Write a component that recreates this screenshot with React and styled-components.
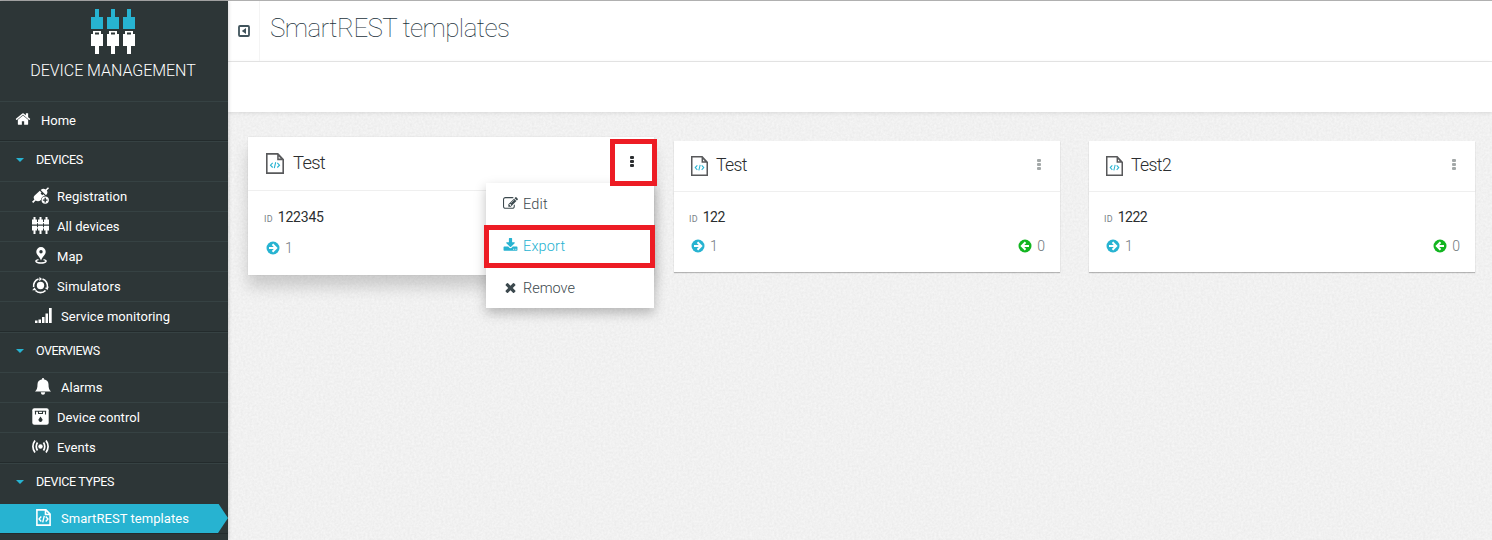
import React from 'react';
import styled, { createGlobalStyle, css } from 'styled-components';

const GlobalStyle = createGlobalStyle`
  * { box-sizing: border-box; }
  body {
    margin: 0;
    overflow: hidden;
    background: #f1f1f1;
    font-family: Roboto, "Liberation Sans", sans-serif;
    color: #2b2e30;
  }
`;

const Page = styled.div`
  display: flex;
  height: 540px;
  border-top: 1px solid #b0b0b0;
`;

/* ---------- sidebar ---------- */

const Sidebar = styled.nav`
  flex: 0 0 228px;
  overflow: hidden;
  background: #2d3637;
  color: #fff;
  box-shadow: 0 0 4px rgba(0, 0, 0, 0.22);
  z-index: 1;
`;

const Brand = styled.div`
  height: 100px;
  display: flex;
  flex-direction: column;
  align-items: center;
  padding: 8px 2px 0 0;
`;

const BrandName = styled.div`
  margin-top: 6px;
  font-size: 16px;
  line-height: 19px;
  font-weight: 300;
  letter-spacing: ${(p) => p.$spacing}px;
  white-space: nowrap;
`;

const HomeRow = styled.div`
  height: 40px;
  display: flex;
  align-items: center;
  padding: 0 0 2px 15px;
  gap: 10px;
  border-top: 1px solid #364243;
  border-bottom: 1px solid #232b2c;
  font-size: 13px;
  svg { margin-top: -2px; }
`;

const SectionRow = styled.div`
  height: 40px;
  display: flex;
  align-items: center;
  padding: 0 0 4px 16px;
  gap: 12px;
  border-top: 1px solid #364243;
  font-size: 12.5px;
  span { letter-spacing: ${(p) => p.$spacing}px; }
`;

const Caret = styled.i`
  border: 4px solid transparent;
  border-top-color: #27b3d1;
  border-bottom-width: 0;
  margin-top: 1px;
`;

const Items = styled.div`
  border-bottom: 1px solid #232b2c;
`;

const ItemRow = styled.div`
  height: 30px;
  display: flex;
  align-items: center;
  border-top: 1px solid #364243;
  padding-left: ${(p) => p.$inset}px;
  gap: ${(p) => p.$gap}px;
  font-size: 13px;
  span { letter-spacing: ${(p) => p.$spacing}px; white-space: nowrap; }
  svg { flex: none; margin-top: -3px; }
  ${(p) => p.$active && css`
    background: #27b3d1 padding-box;
    border-top-color: transparent;
    clip-path: polygon(0 0, 218px 0, 100% 50%, 218px 100%, 0 100%);
  `}
`;

/* ---------- main ---------- */

const Main = styled.main`
  position: relative;
  flex: 1;
  min-width: 0;
`;

const Paper = styled.svg`
  position: absolute;
  inset: 0;
  width: 100%;
  height: 100%;
  z-index: -1;
`;

const TitleBar = styled.header`
  height: 61px;
  display: flex;
  background: #fff;
  border-bottom: 1px solid #e8e8e8;
`;

const Toggle = styled.div`
  width: 32px;
  display: flex;
  align-items: center;
  justify-content: center;
  border-right: 1px solid #f4f4f4;
`;

const Title = styled.h1`
  margin: 10px 0 0 10px;
  font-size: 26px;
  line-height: 34px;
  font-weight: 100;
  letter-spacing: ${(p) => p.$spacing}px;
  color: #1c333d;
`;

const ActionBar = styled.div`
  height: 50px;
  background: #fff;
  box-shadow: 0 1px 4px rgba(0, 0, 0, 0.1);
`;

const Cards = styled.section`
  display: flex;
  align-items: flex-start;
  padding: 29px 0 0 20px;
`;

const Card = styled.article`
  position: relative;
  flex: none;
  width: 386px;
  height: 131px;
  margin-right: 29px;
  background: #fff;
  box-shadow: 0 1px 1px rgba(0, 0, 0, 0.25);
  ${(p) => p.$raised && css`
    width: 406px;
    height: 138px;
    margin: -4px 20px 0 0;
    box-shadow: 0 12px 14px rgba(0, 0, 0, 0.16), 0 0 1px rgba(0, 0, 0, 0.15);
  `}
`;

const CardHeader = styled.div`
  height: ${(p) => (p.$raised ? 54 : 51)}px;
  display: flex;
  align-items: center;
  padding: 0 18px 1px ${(p) => (p.$raised ? 18 : 17)}px;
  border-bottom: 1px solid #efefef;
`;

const CardTitle = styled.h2`
  flex: 1;
  margin: -1px 0 0 ${(p) => (p.$raised ? 9 : 8)}px;
  font-size: ${(p) => (p.$raised ? 18.4 : 17.6)}px;
  font-weight: 300;
  letter-spacing: ${(p) => p.$spacing}px;
`;

const Kebab = styled.div`
  display: flex;
  flex-direction: column;
  gap: 1px;
  margin: ${(p) => (p.$raised ? '0 3px 2px 0' : '-2px 1px 0 0')};
  color: ${(p) => (p.$raised ? '#2b2e30' : '#a3a8a8')};
  i { width: 4px; height: 3px; background: currentColor; border-radius: 1px; }
`;

const IdLine = styled.div`
  display: flex;
  align-items: baseline;
  gap: 5px;
  padding: ${(p) => (p.$raised ? '17px 16px 0' : '16px 15px 0')};
  font-size: 14px;
  line-height: 18px;
  letter-spacing: ${(p) => (p.$raised ? -0.2 : -0.55)}px;
  small { font-size: 9px; color: #7a8388; letter-spacing: 0.2px; }
`;

const Counts = styled.div`
  display: flex;
  justify-content: space-between;
  padding: ${(p) => (p.$raised ? '11px 15px 0 18px' : '9px 15px 0 17px')};
`;

const Count = styled.div`
  display: flex;
  align-items: center;
  gap: 5px;
  height: 18px;
  font-size: 14px;
  font-weight: 300;
  color: #70787c;
`;

const Menu = styled.div`
  position: absolute;
  left: 238px;
  top: 46px;
  width: 168px;
  height: 125px;
  background: #fff;
  box-shadow: 0 5px 11px rgba(0, 0, 0, 0.25);
`;

const MenuItem = styled.div`
  height: 42px;
  display: flex;
  align-items: center;
  gap: 5px;
  padding-left: 17px;
  font-size: 14.5px;
  color: ${(p) => (p.$current ? '#27b3d1' : '#3c494e')};
  font-weight: 300;
  span { letter-spacing: ${(p) => p.$spacing}px; }
  svg { margin-top: -2px; }
`;

const Highlight = styled.div`
  position: absolute;
  left: ${(p) => p.$x}px;
  top: ${(p) => p.$y}px;
  width: ${(p) => p.$w}px;
  height: ${(p) => p.$h}px;
  border: 5px solid #ed1c24;
`;

const HighlightFilled = styled(Highlight)`
  display: flex;
  align-items: center;
  justify-content: center;
  background: #fff;
`;

/* ---------- icons ---------- */

const paths = {
  edit: 'M888 1184l116-116-152-152-116 116v56h96v96h56zm440-720q-16-16-33 1l-350 350q-17 17-1 33t33-1l350-350q17-17 1-33zm80 594v190q0 119-84.5 203.5t-203.5 84.5h-832q-119 0-203.5-84.5t-84.5-203.5v-832q0-119 84.5-203.5t203.5-84.5h832q63 0 117 25 15 7 18 23 3 17-9 29l-49 49q-14 14-32 8-23-6-45-6h-832q-66 0-113 47t-47 113v832q0 66 47 113t113 47h832q66 0 113-47t47-113v-126q0-13 9-22l64-64q15-15 35-7t20 29zm-96-738l288 288-672 672h-288v-288zm444 132l-92 92-288-288 92-92q28-28 68-28t68 28l152 152q28 28 28 68t-28 68z',
  download: 'M1344 1344q0-26-19-45t-45-19-45 19-19 45 19 45 45 19 45-19 19-45zm256 0q0-26-19-45t-45-19-45 19-19 45 19 45 45 19 45-19 19-45zm128-224v320q0 40-28 68t-68 28h-1472q-40 0-68-28t-28-68v-320q0-40 28-68t68-28h465l135 136q58 56 136 56t136-56l136-136h464q40 0 68 28t28 68zm-325-569q17 41-14 70l-448 448q-18 19-45 19t-45-19l-448-448q-31-29-14-70 17-39 59-39h256v-448q0-26 19-45t45-19h256q26 0 45 19t19 45v448h256q42 0 59 39z',
  times: 'M1490 1322q0 40-28 68l-136 136q-28 28-68 28t-68-28l-294-294-294 294q-28 28-68 28t-68-28l-136-136q-28-28-28-68t28-68l294-294-294-294q-28-28-28-68t28-68l136-136q28-28 68-28t68 28l294 294 294-294q28-28 68-28t68 28l136 136q28 28 28 68t-28 68l-294 294 294 294q28 28 28 68z',
  home: 'M1472 992v480q0 26-19 45t-45 19h-384v-384h-256v384h-384q-26 0-45-19t-19-45v-480q0-1 .5-3t.5-3l575-474 575 474q1 2 1 6zm223-69l-62 74q-8 9-21 11h-3q-13 0-21-7l-692-577-692 577q-12 8-24 7-13-2-21-11l-62-74q-8-10-7-23.5t11-21.5l719-599q32-26 76-26t76 26l244 204v-195q0-14 9-23t23-9h192q14 0 23 9t9 23v408l219 182q10 8 11 21.5t-7 23.5z',
};

const Glyph = ({ name, size }) => (
  <svg width={size} height={size} viewBox="0 0 1792 1792" fill="currentColor"><path d={paths[name]} /></svg>
);

const Arrow = ({ left, size }) => (
  <svg width={size} height={size} viewBox="0 0 14 14">
    <circle cx="7" cy="7" r="6.500" fill={left ? '#12b520' : '#27b3d1'} />
    <path d={left ? 'M11 7H4M7.500 3.300L3.800 7l3.700 3.700' : 'M3 7H10M6.500 3.300L10.200 7l-3.700 3.700'} fill="none" stroke="#fff" strokeWidth="2" />
  </svg>
);

const BrandIcon = () => (
  <svg width="44" height="46" viewBox="0 0 44 46">
    {[0, 16, 32].map((x) => (
      <g key={x} transform={`translate(${x} 0)`}>
        <path d="M4 0h4v8h4v12H0V8h4z" fill="#27b3d1" />
        <path d="M2 22h8v3h2v12H8v8H4v-8H0V25h2zM4 23.500V25.500h4v-2z" fill="#fff" fillRule="evenodd" />
      </g>
    ))}
  </svg>
);

const icons = {
  registration: (
    <svg width="17" height="17" viewBox="0 0 17 17" fill="#fff">
      <path d="M16 .300L17 1.300 14.800 3.500C16 5.200 15.400 6.800 14 8.200L8.700 3C10.200 1.600 11.900 1.200 13.600 2.500zM7.800 3.800L9.500 5.500 8.600 6.600l1.700 1.700 1-1 1.700 1.400c-2.400.3-4 2-4.100 4.400-1.900 1.600-3.900 1.400-5.200.4L1.200 16 0 14.800l2.400-2.400C1.200 10.700 1.500 9.500 3.200 8z" />
      <path fillRule="evenodd" d="M13.200 9.400a3.700 3.700 0 1 1 0 7.400 3.700 3.700 0 0 1 0-7.400zm-.7 1.400v1.600h-1.600v1.400h1.600v1.600h1.400v-1.600h1.600v-1.400h-1.600v-1.600z" />
    </svg>
  ),
  devices: (
    <svg width="17" height="17" viewBox="0 0 17 17" fill="#fff">
      {[0, 6, 12].map((x) => (
        <path key={x} transform={`translate(${x} 0)`} d="M1.500 0h2v2.600H5v5H0v-5h1.500zM0 8.800h5v4.700H3.500V17h-2v-3.500H0z" />
      ))}
      <path d="M0 5h17v1.300H0zM0 10.300h17v1.300H0z" />
    </svg>
  ),
  map: (
    <svg width="12" height="17" viewBox="0 0 12 17">
      <path fill="#fff" fillRule="evenodd" d="M6 0a4.700 4.700 0 0 1 4.700 4.700C10.700 8 7 10 6 13.500 5 10 1.300 8 1.300 4.700A4.700 4.700 0 0 1 6 0zm0 3a1.700 1.700 0 1 0 0 3.400A1.700 1.700 0 0 0 6 3z" />
      <path d="M3.500 12.600C-.8 13.300.5 16 6 16s6.800-2.700 2.500-3.400" fill="none" stroke="#fff" strokeWidth="1.400" />
    </svg>
  ),
  simulators: (
    <svg width="17" height="17" viewBox="0 0 17 17" fill="none" stroke="#fff" strokeWidth="1.700">
      <circle cx="8.500" cy="8.500" r="3.700" fill="#fff" stroke="none" />
      <path d="M1.700 10A7 7 0 0 1 6.500 2M10.500 2a7 7 0 0 1 4.800 8M13.500 13.500a7 7 0 0 1-10 0" />
      <path d="M7.500 0l2.500 2-2.800 2.200zM16.800 9.500l-1.300 3.500-2.700-2zM.2 13.200l2.300-2.800 2 2.800z" fill="#fff" stroke="none" />
    </svg>
  ),
  bars: (
    <svg width="17" height="15" viewBox="0 0 17 15" fill="#fff">
      <path d="M0 12.500h2.500V15H0zM3.500 11.500H6V15H3.500zM7 9h2.500v6H7zM10.500 5.500H13V15h-2.500zM14 0h2.700v15H14z" />
    </svg>
  ),
  bell: (
    <svg width="16" height="17" viewBox="0 0 16 17" fill="#fff">
      <path d="M7.200 0h1.600v1.300c3.200.5 4.700 2.500 4.700 5 0 3.800.7 5.700 2.500 7.200H0C1.800 12 2.500 10.100 2.500 6.300c0-2.500 1.500-4.500 4.700-5zM5.800 14.300h4.400C10 16 9.200 16.800 8 16.800S6 16 5.800 14.300z" />
    </svg>
  ),
  control: (
    <svg width="17" height="17" viewBox="0 0 17 17">
      <rect x="0.300" y="0.300" width="16.400" height="16.400" rx="2" fill="#fff" />
      <path d="M2.800 3.300h11.400M3.500 3v3.500M13.500 3v3.500M6 5.500h5M6.500 3v2M10.500 3v2" stroke="#2d3637" strokeWidth="1.100" fill="none" />
      <path d="M8.500 8.500l1.200 1.700a2 2 0 1 1-2.400 0z" fill="#2d3637" />
    </svg>
  ),
  events: (
    <svg width="17" height="13" viewBox="0 0 17 13" fill="none" stroke="#fff" strokeWidth="1.700">
      <circle cx="8.500" cy="6.500" r="2.200" fill="#fff" stroke="none" />
      <path d="M5.500 2.500Q3 6.500 5.500 10.500M11.500 2.500Q14 6.500 11.500 10.500M3 .6Q-1.200 6.500 3 12.400M14 .6Q18.200 6.500 14 12.400" />
    </svg>
  ),
  template: (
    <svg width="15" height="17" viewBox="0 0 15 17" fill="none" stroke="#fff" strokeWidth="1.600">
      <path d="M.9.900h9l4.200 4.200v11H.9zM9.500 1v4.500H14" />
      <path d="M5.300 7.500L3 10l2.300 2.500M9.700 7.500L12 10l-2.300 2.500M8.300 6.800l-1.600 6.500" strokeWidth="1.400" />
    </svg>
  ),
};

const FileIcon = ({ width, height }) => (
  <svg width={width} height={height} viewBox="0 0 18 20" preserveAspectRatio="none" fill="none">
    <path d="M.8.800h11L17.200 6.300V19.200H.8z" stroke="#58595b" strokeWidth="1.600" />
    <path d="M11.200.5v6.300h6.300z" fill="#58595b" />
    <path d="M12.700 3.300v2h2z" fill="#fff" />
    <path d="M6.700 9.400L4.500 11.600l2.200 2.200M11.300 9.400l2.200 2.200-2.200 2.200M9.700 8.800l-1.400 5.600" stroke="#27b3d1" strokeWidth="1.100" />
  </svg>
);

const PaperTexture = () => (
  <Paper aria-hidden="true">
    <filter id="grain" x="0" y="0" width="100%" height="100%" colorInterpolationFilters="sRGB">
      <feTurbulence type="fractalNoise" baseFrequency="0.45" numOctaves="2" seed="4" />
      <feColorMatrix type="matrix" values="0.06 0 0 0 0.914  0.06 0 0 0 0.914  0.06 0 0 0 0.914  0 0 0 0 1" />
    </filter>
    <rect width="100%" height="100%" filter="url(#grain)" />
  </Paper>
);

const Item = ({ icon, children, inset = 32, gap = 8, spacing = 0.05, active }) => (
  <ItemRow $inset={inset} $gap={gap} $spacing={spacing} $active={active}>
    {icons[icon]}
    <span>{children}</span>
  </ItemRow>
);

const Dots = ({ raised }) => <Kebab $raised={raised}><i /><i /><i /></Kebab>;

const TemplateCard = ({ title, id, raised, children }) => (
  <Card $raised={raised}>
    <CardHeader $raised={raised}>
      <FileIcon width={raised ? 18 : 17} height={raised ? 21 : 20} />
      <CardTitle $raised={raised} $spacing={raised ? -0.7 : -0.6}>{title}</CardTitle>
      {!raised && <Dots />}
    </CardHeader>
    <IdLine $raised={raised}><small>ID</small>{id}</IdLine>
    <Counts $raised={raised}>
      <Count><Arrow size={14} />1</Count>
      {!raised && <Count><Arrow left size={14} />0</Count>}
    </Counts>
    {children}
  </Card>
);

export default function App() {
  return (
    <>
      <GlobalStyle />
      <Page>
        <Sidebar>
          <Brand>
            <BrandIcon />
            <BrandName $spacing={-0.05}>DEVICE MANAGEMENT</BrandName>
          </Brand>
          <HomeRow><Glyph name="home" size={16} />Home</HomeRow>
          <SectionRow $spacing={-0.35}><Caret /><span>DEVICES</span></SectionRow>
          <Items>
            <Item icon="registration">Registration</Item>
            <Item icon="devices">All devices</Item>
            <Item icon="map" inset={35} gap={10}>Map</Item>
            <Item icon="simulators" spacing={0.15}>Simulators</Item>
            <Item icon="bars" inset={35} gap={9}>Service monitoring</Item>
          </Items>
          <SectionRow $spacing={-0.5}><Caret /><span>OVERVIEWS</span></SectionRow>
          <Items>
            <Item icon="bell" inset={35} gap={10}>Alarms</Item>
            <Item icon="control">Device control</Item>
            <Item icon="events">Events</Item>
          </Items>
          <SectionRow $spacing={-0.35}><Caret /><span>DEVICE TYPES</span></SectionRow>
          <Items>
            <Item icon="template" inset={36} gap={10} active>SmartREST templates</Item>
          </Items>
        </Sidebar>
        <Main>
          <PaperTexture />
          <TitleBar>
            <Toggle>
              <svg width="12" height="12" viewBox="0 0 12 12">
                <rect x="1" y="1" width="10" height="10" rx="1" fill="none" stroke="#41545c" strokeWidth="1.800" />
                <path d="M8 3v6L3.800 6z" fill="#41545c" />
              </svg>
            </Toggle>
            <Title $spacing={-0.6}>SmartREST templates</Title>
          </TitleBar>
          <ActionBar />
          <Cards>
            <TemplateCard title="Test" id="122345" raised>
              <Menu>
                <MenuItem $spacing={0.15}><Glyph name="edit" size={15} /><span>Edit</span></MenuItem>
                <MenuItem $spacing={0.15} $current><Glyph name="download" size={15} /><span>Export</span></MenuItem>
                <MenuItem $spacing={0}><Glyph name="times" size={15} /><span>Remove</span></MenuItem>
              </Menu>
              <HighlightFilled $x={362} $y={2} $w={47} $h={47}><Dots raised /></HighlightFilled>
              <Highlight $x={236} $y={88} $w={171} $h={43} />
            </TemplateCard>
            <TemplateCard title="Test" id="122" />
            <TemplateCard title="Test2" id="1222" />
          </Cards>
        </Main>
      </Page>
    </>
  );
}
